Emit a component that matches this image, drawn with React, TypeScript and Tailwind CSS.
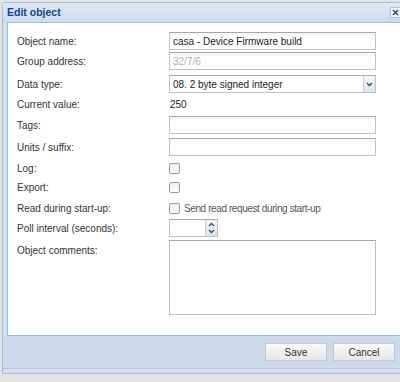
import React from "react";

const Label = ({ children }: { children: React.ReactNode }) => (
  <div className="w-[161px] shrink-0 pl-[9px]">{children}</div>
);

const Input = ({ value, disabled, w = "w-[207px]" }: { value?: string; disabled?: boolean; w?: string }) => (
  <div
    className={`${w} h-[18px] border border-[#c2c2c2] border-t-[#a8a8a8] bg-[linear-gradient(#f2f2f2,#ffffff_4px)] flex items-center pl-[3px] ${disabled ? "text-[#b0b0b0]" : "text-[#222]"}`}
  >
    {value}
  </div>
);

const Check = () => (
  <div className="w-[11px] h-[11px] border border-[#9a9a9a] rounded-[2px] bg-[linear-gradient(#f0f0f0,#ffffff)]" />
);

export default function App() {
  return (
    <div
      className="w-[400px] h-[382px] bg-[#e4e4e4] overflow-hidden pl-[2px] pt-[2px] text-[10px] text-[#333]"
      style={{ fontFamily: '"Liberation Sans", Arial, sans-serif' }}
    >
      <div className="w-[408px] border border-[#a9bcd6] bg-[#cbd9ec] rounded-tl-[3px]">
        {/* header */}
        <div className="h-[19px] flex items-center pl-[4px] bg-[linear-gradient(#dfe8f6,#cddcef)]">
          <span className="font-bold text-[#15428b] text-[10.5px]">Edit object</span>
          <div className="ml-auto mr-[8px] w-[11px] h-[11px] bg-[#f3f6fb] border border-[#b0c4de] flex items-center justify-center">
            <svg width="7" height="7" viewBox="0 0 7 7">
              <path d="M1 1 L6 6 M6 1 L1 6" stroke="#2d4a7a" strokeWidth="1.5" />
            </svg>
          </div>
        </div>
        {/* body */}
        <div className="px-[4px] bg-[#d3e0f1]">
          <div className="h-[314px] bg-white border border-[#99bbe8] flex flex-col">
            <div className="mt-[9px] flex items-center h-[18px]">
              <Label>Object name:</Label>
              <Input value="casa - Device Firmware build" />
            </div>
            <div className="mt-[2px] flex items-center h-[18px]">
              <Label>Group address:</Label>
              <Input value="32/7/6" disabled />
            </div>
            <div className="mt-[5px] flex items-center h-[18px]">
              <Label>Data type:</Label>
              <div className="w-[207px] h-[18px] border border-[#c2c2c2] border-t-[#a8a8a8] flex">
                <div className="flex-1 flex items-center pl-[3px] text-[#222]">08. 2 byte signed integer</div>
                <div className="w-[12px] h-full bg-[linear-gradient(#f4f7fb,#dbe3ee)] border-l border-[#c6cfdb] flex items-center justify-center">
                  <svg width="7" height="5" viewBox="0 0 7 5">
                    <path d="M1 1 L3.5 3.5 L6 1" stroke="#3a4f74" strokeWidth="1.4" fill="none" />
                  </svg>
                </div>
              </div>
            </div>
            <div className="mt-[2px] flex items-center h-[18px]">
              <Label>Current value:</Label>
              <div className="pl-[1px] text-[#222]">250</div>
            </div>
            <div className="mt-[3px] flex items-center h-[18px]">
              <Label>Tags:</Label>
              <Input />
            </div>
            <div className="mt-[4px] flex items-center h-[18px]">
              <Label>Units / suffix:</Label>
              <Input />
            </div>
            <div className="mt-[3px] flex items-center h-[18px]">
              <Label>Log:</Label>
              <Check />
            </div>
            <div className="mt-[1px] flex items-center h-[18px]">
              <Label>Export:</Label>
              <Check />
            </div>
            <div className="mt-[3px] flex items-center h-[18px]">
              <Label>Read during start-up:</Label>
              <Check />
              <span className="ml-[4px] text-[#555] tracking-[-0.4px]">Send read request during start-up</span>
            </div>
            <div className="mt-[2px] flex items-center h-[18px]">
              <Label>Poll interval (seconds):</Label>
              <div className="w-[49px] h-[18px] border border-[#c2c2c2] border-t-[#a8a8a8] flex">
                <div className="flex-1" />
                <div className="w-[12px] h-full bg-[linear-gradient(#f4f7fb,#dbe3ee)] border-l border-[#c6cfdb] flex flex-col items-center justify-center gap-[2px]">
                  <svg width="7" height="5" viewBox="0 0 7 5">
                    <path d="M1 4 L3.5 1.5 L6 4" stroke="#3a4f74" strokeWidth="1.4" fill="none" />
                  </svg>
                  <svg width="7" height="5" viewBox="0 0 7 5">
                    <path d="M1 1 L3.5 3.5 L6 1" stroke="#3a4f74" strokeWidth="1.4" fill="none" />
                  </svg>
                </div>
              </div>
            </div>
            <div className="mt-[3px] flex items-start">
              <Label>
                <div className="pt-[3px]">Object comments:</div>
              </Label>
              <div className="w-[207px] h-[75px] border border-[#c2c2c2] border-t-[#a8a8a8] bg-white" />
            </div>
          </div>
        </div>
        {/* footer */}
        <div className="h-[33px] bg-[#ccdaec] flex items-center pr-[15px] border-b border-[#b4c6de]">
          <div className="ml-[262px] flex gap-[6px]">
            <button className="w-[62px] h-[18px] border border-[#c8c8c8] bg-[linear-gradient(#fafafa,#e6e6e6)] text-[#333] text-[10px] flex items-center justify-center">
              Save
            </button>
            <button className="w-[62px] h-[18px] border border-[#c8c8c8] bg-[linear-gradient(#fafafa,#e6e6e6)] text-[#333] text-[10px] flex items-center justify-center">
              Cancel
            </button>
          </div>
        </div>
        <div className="h-[4px] bg-[#d6e1ef]" />
      </div>
    </div>
  );
}
